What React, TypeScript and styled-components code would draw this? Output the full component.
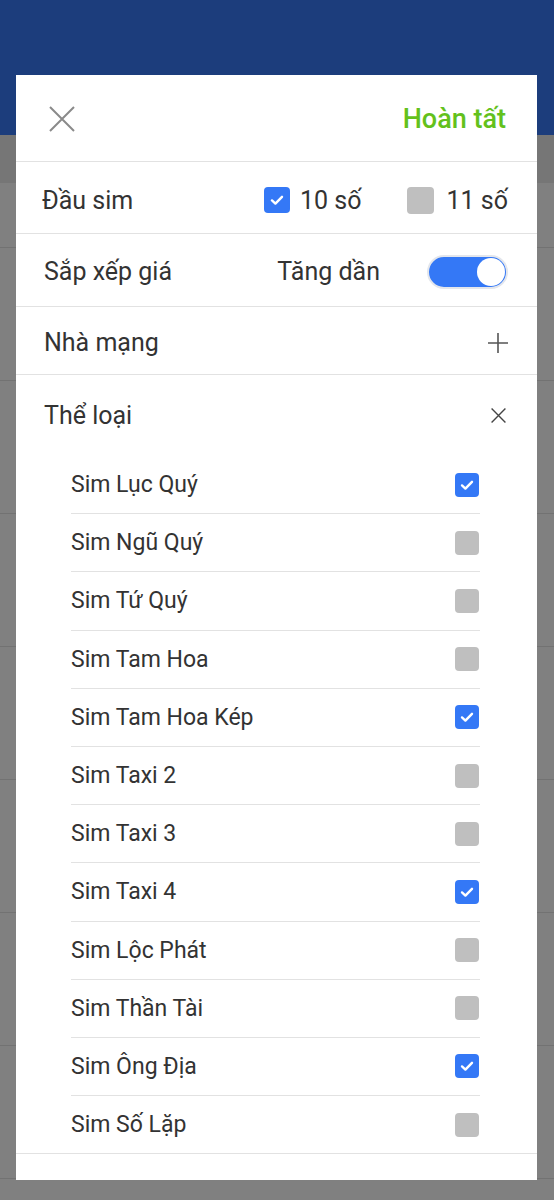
import React from "react";
import styled, { createGlobalStyle } from "styled-components";

const Global = createGlobalStyle`
  html, body { margin: 0; padding: 0; }
  body { font-family: Roboto, "Noto Sans", Arial, sans-serif; background: #808080; }
  * { box-sizing: border-box; }
`;

const Page = styled.div`
  width: 554px;
  height: 1200px;
  overflow: hidden;
  background: #808080;
  display: flex;
  flex-direction: column;
`;

const TopBar = styled.div`
  height: 135px;
  background: #1c3d7c;
  flex: none;
`;

const SubBar = styled.div`
  height: 48px;
  background: #767676;
  flex: none;
`;

const BgRow = styled.div<{ $h: number }>`
  height: ${(p) => p.$h}px;
  border-bottom: 1px solid #727272;
  flex: none;
`;

const Modal = styled.div`
  position: fixed;
  left: 16px;
  top: 75px;
  width: 521px;
  height: 1105px;
  background: #fff;
  overflow: hidden;
  display: flex;
  flex-direction: column;
  color: #333;
`;

const Header = styled.div`
  height: 87px;
  flex: none;
  display: flex;
  align-items: center;
  justify-content: space-between;
  padding: 2px 31px 0 33px;
  border-bottom: 1px solid #e2e2e2;
`;

const Done = styled.span`
  color: #63c11c;
  font-size: 27px;
  font-weight: 500;
`;

const Row = styled.div<{ $h: number; $pt: number }>`
  height: ${(p) => p.$h}px;
  flex: none;
  display: flex;
  align-items: center;
  padding: ${(p) => p.$pt}px 29px 0 28px;
  border-bottom: 1px solid #e2e2e2;
  font-size: 25px;
`;

const Label = styled.span<{ $shift?: number }>`
  flex: 1;
  margin-left: ${(p) => p.$shift ?? 0}px;
`;

const Option = styled.label<{ $gap: number; $ml: number }>`
  display: flex;
  align-items: center;
  gap: ${(p) => p.$gap}px;
  margin-left: ${(p) => p.$ml}px;
`;

const Box = styled.span<{ $on: boolean; $size: number }>`
  width: ${(p) => p.$size}px;
  height: ${(p) => p.$size}px;
  border-radius: 4px;
  background: ${(p) => (p.$on ? "#3478f6" : "#bfbfbf")};
  display: inline-flex;
  align-items: center;
  justify-content: center;
  flex: none;
`;

const SortValue = styled.span`
  margin-right: 47px;
`;

const Toggle = styled.span`
  width: 81px;
  height: 34px;
  border-radius: 17px;
  background: #3478f6;
  border: 2px solid #e3e6ec;
  display: flex;
  align-items: center;
  justify-content: flex-end;
  padding-right: 1px;
`;

const Knob = styled.span`
  width: 28px;
  height: 28px;
  border-radius: 50%;
  background: #fff;
`;

const Section = styled.div`
  flex: none;
  border-bottom: 1px solid #e2e2e2;
`;

const SectionHead = styled.div`
  height: 78px;
  display: flex;
  align-items: center;
  justify-content: space-between;
  padding: 2px 31px 0 28px;
  font-size: 25px;
`;

const List = styled.div`
  margin: 3px 57px 0 55px;
  display: flex;
  flex-direction: column;
`;

const Item = styled.div`
  height: 58.2px;
  display: flex;
  align-items: center;
  justify-content: space-between;
  font-size: 23px;
  color: #333;
  border-bottom: 1px solid #e2e2e2;
  padding-right: 1px;
  &:last-child { border-bottom: none; height: 57px; }
`;

const Check = () => (
  <svg width="16" height="16" viewBox="0 0 16 16">
    <path d="M3 8.4 L6.4 11.6 L13 4.8" fill="none" stroke="#fff" strokeWidth="2.4" strokeLinecap="round" strokeLinejoin="round" />
  </svg>
);

const CloseIcon = ({ size, color, w }: { size: number; color: string; w: number }) => (
  <svg width={size} height={size} viewBox="0 0 26 26">
    <path d="M1 1 L25 25 M25 1 L1 25" stroke={color} strokeWidth={w} fill="none" />
  </svg>
);

const PlusIcon = () => (
  <svg width="20" height="20" viewBox="0 0 20 20">
    <path d="M10 0 V20 M0 10 H20" stroke="#555" strokeWidth="1.6" fill="none" />
  </svg>
);

const items: [string, boolean][] = [
  ["Sim Lục Quý", true],
  ["Sim Ngũ Quý", false],
  ["Sim Tứ Quý", false],
  ["Sim Tam Hoa", false],
  ["Sim Tam Hoa Kép", true],
  ["Sim Taxi 2", false],
  ["Sim Taxi 3", false],
  ["Sim Taxi 4", true],
  ["Sim Lộc Phát", false],
  ["Sim Thần Tài", false],
  ["Sim Ông Địa", true],
  ["Sim Số Lặp", false],
];

export default function App() {
  return (
    <>
      <Global />
      <Page>
        <TopBar />
        <SubBar />
        <BgRow $h={65} />
        {Array.from({ length: 8 }).map((_, i) => (
          <BgRow key={i} $h={133} />
        ))}
      </Page>
      <Modal>
        <Header>
          <CloseIcon size={26} color="#8a8a8a" w={2} />
          <Done>Hoàn tất</Done>
        </Header>
        <Row $h={72} $pt={5}>
          <Label $shift={-2}>Đầu sim</Label>
          <Option $gap={10} $ml={0}>
            <Box $on $size={26}><Check /></Box>
            10 số
          </Option>
          <Option $gap={13} $ml={45}>
            <Box $on={false} $size={27} />
            11 số
          </Option>
        </Row>
        <Row $h={73} $pt={3}>
          <Label>Sắp xếp giá</Label>
          <SortValue>Tăng dần</SortValue>
          <Toggle><Knob /></Toggle>
        </Row>
        <Row $h={68} $pt={4}>
          <Label>Nhà mạng</Label>
          <PlusIcon />
        </Row>
        <Section>
          <SectionHead>
            <span>Thể loại</span>
            <CloseIcon size={15} color="#444" w={2.4} />
          </SectionHead>
          <List>
            {items.map(([name, on]) => (
              <Item key={name}>
                <span>{name}</span>
                <Box $on={on} $size={24}>{on && <Check />}</Box>
              </Item>
            ))}
          </List>
        </Section>
      </Modal>
    </>
  );
}
